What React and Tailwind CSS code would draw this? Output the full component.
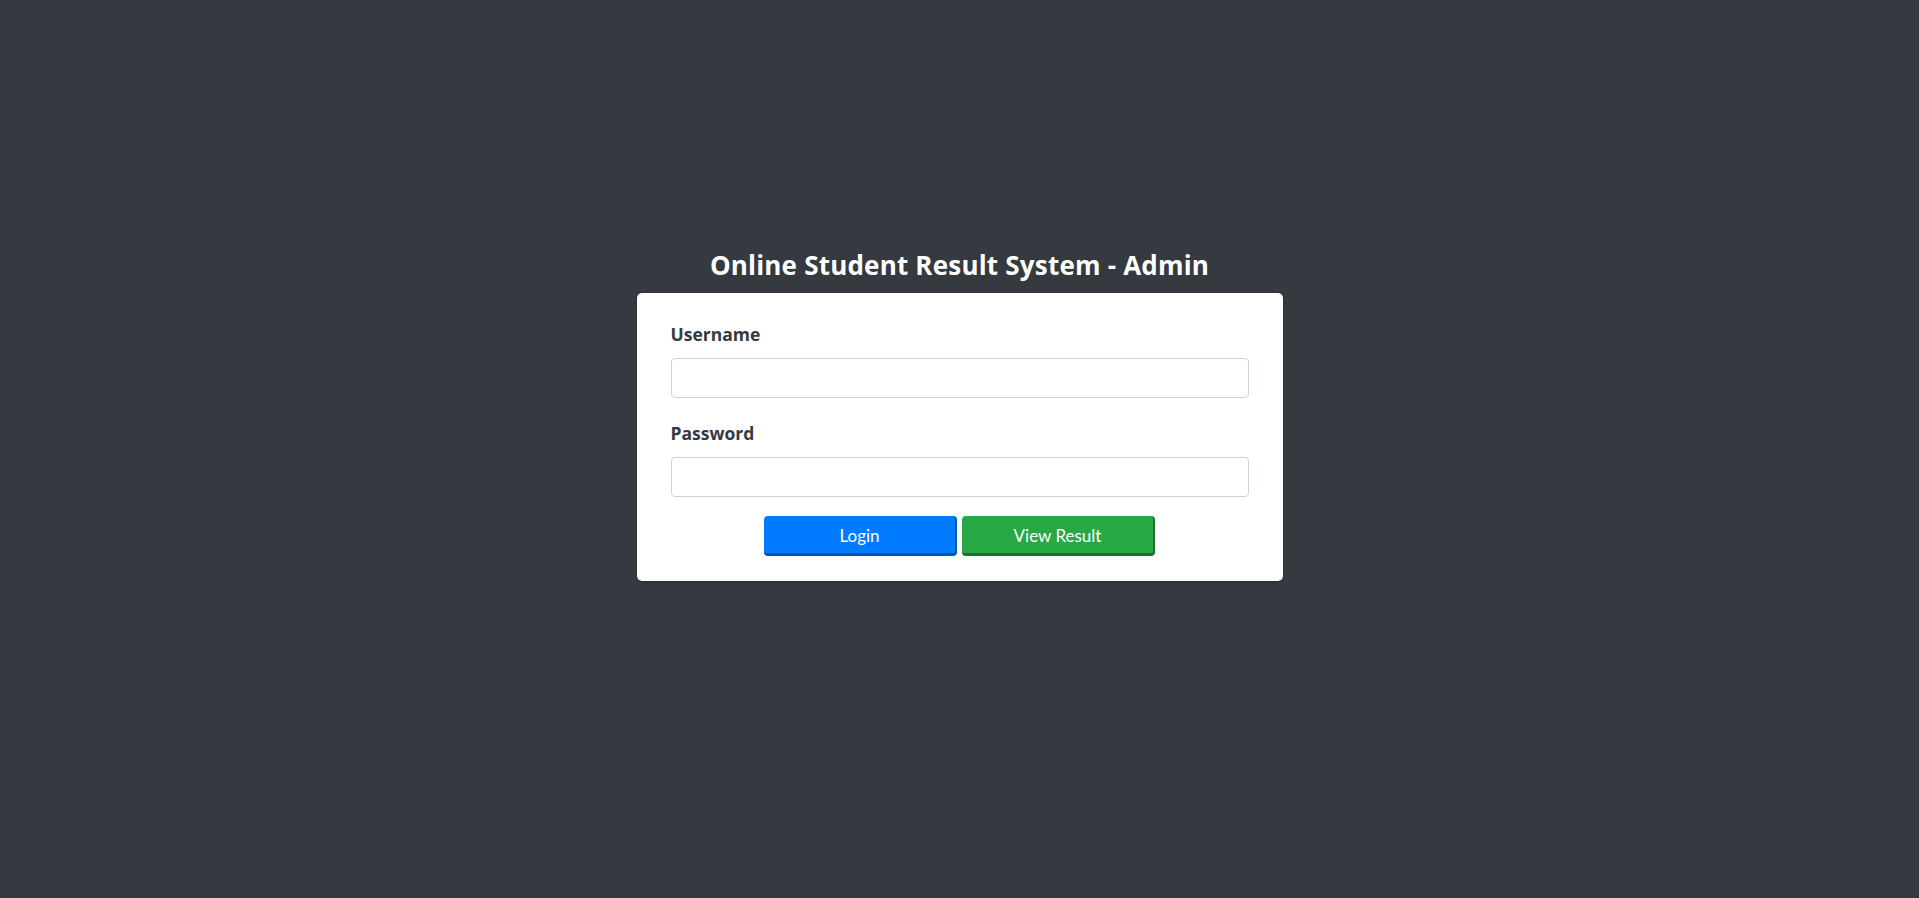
export default function App() {
  return (
    <div
      className="min-h-screen w-full bg-[#343a40] flex flex-col items-center pt-[250px]"
      style={{ fontFamily: '"Open Sans", Lato, sans-serif' }}
    >
      {/* Title */}
      <h1 className="text-[26px] leading-[30px] font-bold tracking-[0.2px] text-white mb-[13px]">
        Online Student Result System - Admin
      </h1>

      {/* Login card */}
      <div className="w-[646px] bg-white rounded-[5px] shadow-[0_0_1px_rgba(0,0,0,0.13),0_1px_3px_rgba(0,0,0,0.2)] px-[34px] pt-[29px] pb-[25px]">
        <form onSubmit={e => e.preventDefault()}>
          <label className="block text-[17.5px] leading-[24px] font-bold text-[#343a40]">
            Username
          </label>
          <input
            type="text"
            className="mt-[12px] block w-full h-[40px] rounded-[4px] border border-[#ced4da] bg-white px-3 text-[18px] text-[#495057] outline-none"
          />

          <label className="block mt-[23px] text-[17.5px] leading-[24px] font-bold text-[#343a40]">
            Password
          </label>
          <input
            type="password"
            className="mt-[12px] block w-full h-[40px] rounded-[4px] border border-[#ced4da] bg-white px-3 text-[18px] text-[#495057] outline-none"
          />

          <div className="mt-[19px] flex justify-center gap-[5px] font-['Lato',sans-serif]">
            <button
              type="submit"
              className="w-[193px] h-[40px] pt-[2px] rounded-[4px] bg-[#007bff] border-r-2 border-b-[3px] border-[#0056b3] text-white text-[17px] leading-[24px] flex items-center justify-center"
            >
              Login
            </button>
            <button
              type="button"
              className="w-[193px] h-[40px] pt-[2px] rounded-[4px] bg-[#28a745] border-r-2 border-b-[3px] border-[#1e6e31] text-white text-[17px] leading-[24px] flex items-center justify-center"
            >
              View Result
            </button>
          </div>
        </form>
      </div>
    </div>
  );
}
